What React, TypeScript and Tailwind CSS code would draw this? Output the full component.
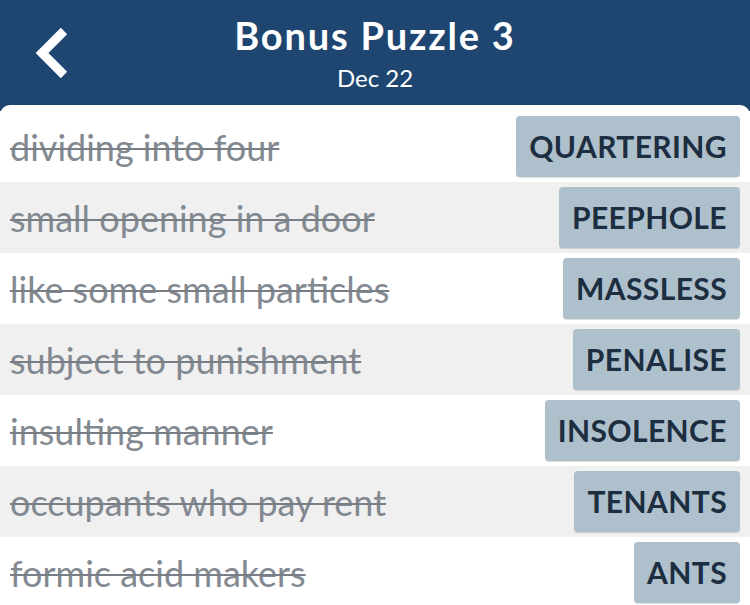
import React from 'react';

const CLUES = [
    { clue: 'dividing into four', answer: 'QUARTERING' },
    { clue: 'small opening in a door', answer: 'PEEPHOLE' },
    { clue: 'like some small particles', answer: 'MASSLESS' },
    { clue: 'subject to punishment', answer: 'PENALISE' },
    { clue: 'insulting manner', answer: 'INSOLENCE' },
    { clue: 'occupants who pay rent', answer: 'TENANTS' },
    { clue: 'formic acid makers', answer: 'ANTS' },
];

const BackIcon = () => (
    <svg width="36" height="54" viewBox="0 0 36 54" fill="none">
        <path d="M30 5 L8 27 L30 49" stroke="white" strokeWidth="9" strokeLinecap="butt" strokeLinejoin="miter" />
    </svg>
);

export default function App() {
    return (
        <div className="w-[750px] h-[605px] overflow-hidden bg-[#1f4670] flex flex-col font-['Lato',sans-serif]">
            {/* header */}
            <div className="h-[105px] shrink-0 flex items-start relative">
                <div className="absolute left-[34px] top-[26px]">
                    <BackIcon />
                </div>
                <div className="flex-1 flex flex-col items-center pt-[10px]">
                    <div className="text-white font-bold text-[38px] leading-[50px] tracking-[1.8px]">Bonus Puzzle 3</div>
                    <div className="text-white text-[24px] leading-[30px] mt-[3px]">Dec 22</div>
                </div>
            </div>

            {/* list */}
            <div className="flex-1 bg-white rounded-t-[10px] pt-[6px] flex flex-col">
                {CLUES.map((item, i) => (
                    <div
                        key={item.answer}
                        className={`h-[71px] shrink-0 flex items-center justify-between pl-[10px] pr-[10px] ${i % 2 === 1 ? 'bg-[#f0f0f0]' : 'bg-white'}`}
                    >
                        <span className="text-[#838990] text-[36px] leading-[44px] line-through decoration-[1.5px] decoration-[#787e86]">
                            {item.clue}
                        </span>
                        <span className="h-[61px] flex items-center pl-[13px] pr-[13px] rounded-[4px] bg-[#afc0cd] shadow-[0_1px_1px_rgba(0,0,0,0.15)] text-[#1c2e40] font-bold text-[30px] tracking-[0.4px]">
                            {item.answer}
                        </span>
                    </div>
                ))}
            </div>
        </div>
    );
}
